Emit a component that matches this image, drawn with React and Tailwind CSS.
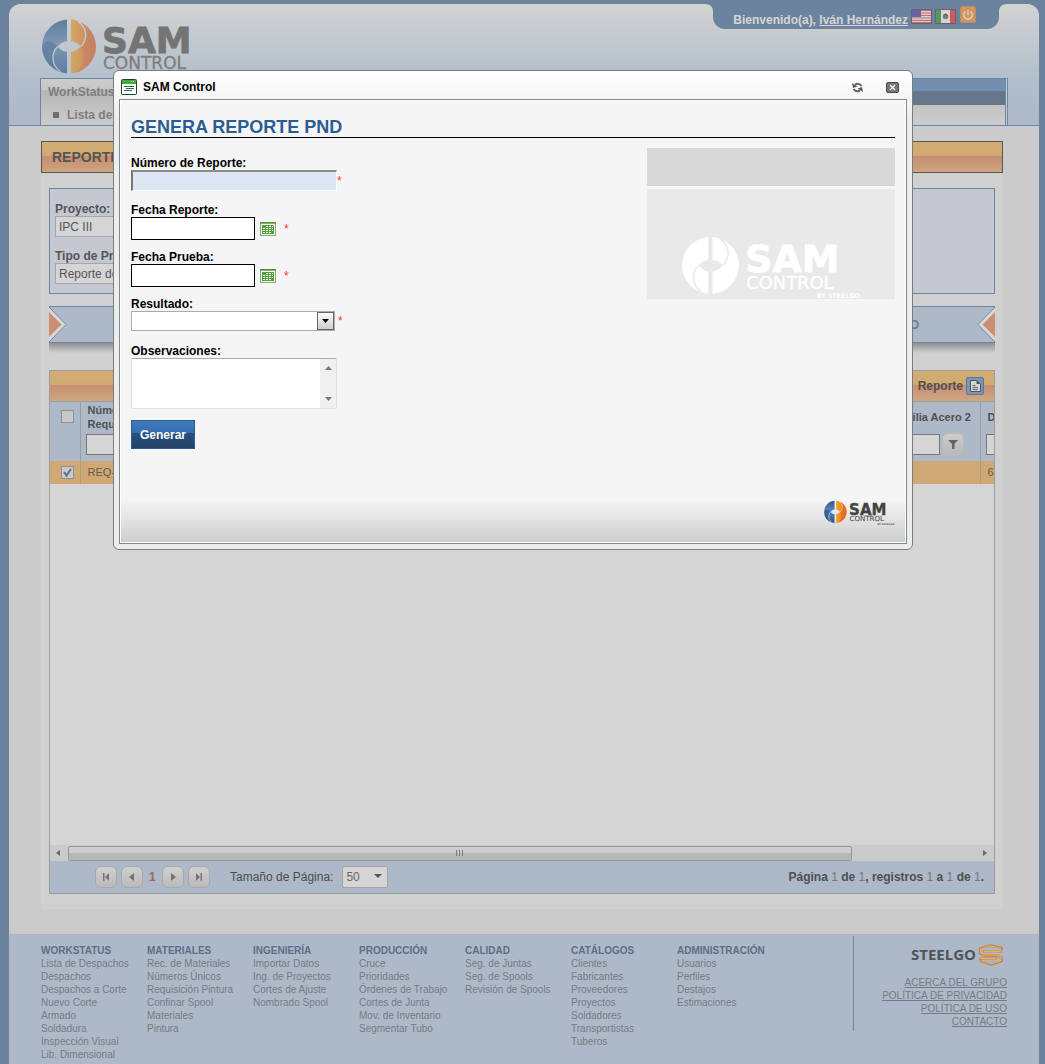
import React from "react";

const footerColumns = [
  { title: "WORKSTATUS", items: ["Lista de Despachos", "Despachos", "Despachos a Corte", "Nuevo Corte", "Armado", "Soldadura", "Inspección Visual", "Lib. Dimensional"] },
  { title: "MATERIALES", items: ["Rec. de Materiales", "Números Únicos", "Requisición Pintura", "Confinar Spool", "Materiales", "Pintura"] },
  { title: "INGENIERÍA", items: ["Importar Datos", "Ing. de Proyectos", "Cortes de Ajuste", "Nombrado Spool"] },
  { title: "PRODUCCIÓN", items: ["Cruce", "Prioridades", "Órdenes de Trabajo", "Cortes de Junta", "Mov. de Inventario", "Segmentar Tubo"] },
  { title: "CALIDAD", items: ["Seg. de Juntas", "Seg. de Spools", "Revisión de Spools"] },
  { title: "CATÁLOGOS", items: ["Clientes", "Fabricantes", "Proveedores", "Proyectos", "Soldadores", "Transportistas", "Tuberos"] },
  { title: "ADMINISTRACIÓN", items: ["Usuarios", "Perfiles", "Destajos", "Estimaciones"] },
];

const corporateLinks = ["ACERCA DEL GRUPO", "POLÍTICA DE PRIVACIDAD", "POLÍTICA DE USO", "CONTACTO"];

function SamLogo({ id, className, left, leftLight, right, rightDark, strong, soft, tagline }) {
  return (
    <svg className={className} viewBox="0 0 170 60" role="img" aria-label="SAM Control">
      <defs>
        <mask id={id + "-cut"}>
          <rect width="60" height="60" fill="#fff" />
          <rect x="25" width="4" height="60" fill="#000" />
          <path d="M15.6 28.5Q20 23 27 23T39 28.5Q34 34.2 27 34.2T15.6 28.5Z" fill="#000" />
          <path d="M15.6 28.5C9 35 9 47 18.4 53.6M35.9 3.4C46 10 45.5 21 39.1 28.5" fill="none" stroke="#000" strokeWidth="1.4" />
        </mask>
        <linearGradient id={id + "-l"} x1="0" y1="0" x2="0" y2="1">
          <stop offset="0" stopColor={left} />
          <stop offset=".45" stopColor={leftLight} />
          <stop offset="1" stopColor={left} />
        </linearGradient>
        <linearGradient id={id + "-r"} x1="0" y1="0" x2="1" y2="0">
          <stop offset="0" stopColor={right} />
          <stop offset="1" stopColor={rightDark} />
        </linearGradient>
      </defs>
      <g mask={`url(#${id}-cut)`}>
        <path d="M27 1.5A27 27 0 0 0 27 55.5Z" fill={`url(#${id}-l)`} />
        <path d="M27 1.5A27 27 0 0 1 27 55.5Z" fill={`url(#${id}-r)`} />
        <path d="M35.9 3.4A27 27 0 0 1 34 54.5Q46 44 39.1 28.5C45.5 21 46 10 35.9 3.4Z" fill={rightDark} opacity=".6" />
        <path d="M15.6 28.5C9 35 9 47 18.4 53.6Q2 48 0 28.5Q5 18 15.6 28.5Z" fill={left} opacity=".7" />
      </g>
      <g fontFamily="'DejaVu Sans', sans-serif">
        <text x="60" y="35" fontSize="36" fontWeight="bold" fill={strong} stroke={strong} strokeWidth=".8">SAM</text>
        <text x="61" y="51" fontSize="17" fill={soft} stroke={soft} strokeWidth=".3">CONTROL</text>
        {tagline && <text x="169" y="59" fontSize="6" fontWeight="bold" textAnchor="end" fill={soft}>BY STEELGO</text>}
      </g>
    </svg>
  );
}

function UsFlag() {
  return (
    <svg className="block h-[15px] w-[21px]" viewBox="0 0 21 15" aria-label="English">
      <rect width="21" height="15" fill="#666" />
      <rect x="1" y="1" width="19" height="13" fill="#d4d0d0" />
      <path d="M1 1.5H20M1 4H20M1 6.5H20M1 9H20M1 11.5H20M1 13.5H20" stroke="#cc6868" strokeWidth="1.2" />
      <rect x="1" y="1" width="9" height="7" fill="#6464a4" />
    </svg>
  );
}

function MxFlag() {
  return (
    <svg className="block h-[15px] w-[21px]" viewBox="0 0 21 15" aria-label="Español">
      <rect width="21" height="15" fill="#666" />
      <rect x="1" y="1" width="5" height="13" fill="#579763" />
      <rect x="6" y="1" width="9" height="13" fill="#d4d4d4" />
      <rect x="15" y="1" width="5" height="13" fill="#d05858" />
      <circle cx="10.5" cy="7.5" r="2.8" fill="#7f7f68" />
      <path d="M9 6l2-1 1.5 2" stroke="#5a5a48" fill="none" />
    </svg>
  );
}

function CalendarIcon() {
  return (
    <svg className="block h-4 w-4" viewBox="0 0 16 16" shapeRendering="crispEdges">
      <rect x="0" y="1" width="16" height="14" fill="#7db765" />
      <rect x="0" y="1" width="16" height="1" fill="#4d8f3f" />
      <rect x="1" y="3" width="14" height="11" fill="#f6faf4" />
      <rect x="2" y="4" width="12" height="9" fill="#57a03f" />
      <path d="M6 5h2v1H6zM9 5h2v1H9zM12 5h1v1h-1zM3 7h2v1H3zM6 7h2v1H6zM9 7h2v1H9zM12 7h1v1h-1zM3 9h2v1H3zM6 9h2v1H6zM9 9h2v1H9zM12 9h1v1h-1zM3 11h2v1H3zM6 11h2v1H6zM9 11h2v1H9z" fill="#fff" />
    </svg>
  );
}

function PagerButton({ label, d }) {
  return (
    <button type="button" aria-label={label} className="flex size-[22px] items-center justify-center rounded-md border border-[#aaa8a5] bg-linear-to-b from-[#d0d0d0] to-[#bababa]">
      <svg className="size-3" viewBox="0 0 12 12"><path d={d} fill="#747474" /></svg>
    </button>
  );
}

function Required() {
  return <span className="text-xs leading-5 text-[#f33]">*</span>;
}

function Header() {
  return (
    <header className="flex h-[122px] flex-col rounded-t-xl bg-linear-to-b from-[#d2d2d2] via-[#b3bfcc] via-60% to-[#adb8c9]">
      <div className="flex h-[74px] items-start justify-between pl-[33px]">
        <SamLogo id="head" className="mt-3.5 h-[60px] w-[170px]" left="#5f7c9f" leftLight="#7e97b3" right="#d3ab60" rightDark="#c68062" strong="#747474" soft="#7e7e7e" />
        <div className="flex pr-8">
          <svg className="size-2" viewBox="0 0 8 8"><path d="M0 0H8V8Q8 0 0 0Z" fill="#6c839e" /></svg>
          <div className="flex h-[25px] items-start rounded-b-xl bg-[#6c839e] pr-[23px] pl-5 text-xs font-bold text-[#d5d5d5]">
            <span className="mt-2 mr-[3px] leading-4 whitespace-nowrap">Bienvenido(a), <a href="#perfil" className="underline">Iván Hernández</a></span>
            <button type="button" className="mt-[5px] mr-[3px]"><UsFlag /></button>
            <button type="button" className="mt-[5px] mr-1"><MxFlag /></button>
            <button type="button" aria-label="Salir" className="mt-0.5 flex h-[17px] w-4 items-center justify-center rounded-xs border border-[#b98a65] bg-[#cf965f]">
              <svg className="size-3" viewBox="0 0 12 12" fill="none" stroke="#dedbd5" strokeWidth="1.2"><path d="M6 1V6M3.5 2.5A4.2 4.2 0 1 0 8.5 2.5" /></svg>
            </button>
          </div>
          <svg className="size-2" viewBox="0 0 8 8"><path d="M8 0H0V8Q0 0 8 0Z" fill="#6c839e" /></svg>
        </div>
      </div>
      <div className="flex h-12">
        <div className="w-[31px] border-b border-[#6c87a5]" />
        <nav className="flex grow border border-[#6c87a5] bg-linear-to-b from-[#b7b7b7] to-[#cdcdcd] font-bold text-[#7f7f7f]">
          <div className="flex w-[300px] flex-col bg-[linear-gradient(#cdcdcd_0%,#c5c5c5_24%,#b7b7b7_25%,#cbcbcb_100%)] pl-[7px] text-xs">
            <a href="#workstatus" className="mt-[5px] leading-4">WorkStatus</a>
            <a href="#lista" className="mt-[7px] flex items-center leading-4"><span className="mr-2 ml-[5px] size-1.5 bg-[#6e6e6e]" />Lista de</a>
          </div>
          <div className="grow">
            <div className="h-3 bg-[#7190b0]" />
            <div className="h-3.5 bg-[#66778c]" />
          </div>
          <div className="w-0.5 border-l border-[#6c87a5] bg-[#cdcdcd]" />
        </nav>
        <div className="w-[31px] border-b border-[#6c87a5]" />
      </div>
    </header>
  );
}

function Filters() {
  return (
    <section className="h-[106px] border border-[#6c87a5] bg-[#c4c8d1] px-[5px] pt-[13px] text-xs text-[#555]">
      <div className="mb-3 flex w-52 flex-col">
        <label htmlFor="proyecto" className="leading-3.5 font-bold">Proyecto:</label>
        <select id="proyecto" className="h-[21px] appearance-none border border-[#a5a7ab] bg-[#d5d5d5] px-[3px]"><option>IPC III</option></select>
      </div>
      <div className="flex w-52 flex-col">
        <label htmlFor="tipo" className="leading-3.5 font-bold">Tipo de Prueba:</label>
        <select id="tipo" className="h-[21px] appearance-none border border-[#a5a7ab] bg-[#d5d5d5] px-[3px]"><option>Reporte de PND</option></select>
      </div>
    </section>
  );
}

function StepBar() {
  return (
    <section className="mt-3">
      <div className="flex h-[37px] items-center justify-between border-y border-[#6c87a5] bg-[#adb9c8]">
        <svg className="h-[35px] w-[18px]" viewBox="0 0 18 35"><path d="M0 0L17.5 17.5L0 35Z" fill="#d8d8d8" /><path d="M0 0L17 17.5L0 35" fill="none" stroke="#6c87a5" /><path d="M0 5L12.5 17.5L0 30Z" fill="#ca8f73" /></svg>
        <span className="ml-auto pr-[58px] text-xs font-bold text-[#6480a3]">O</span>
        <svg className="h-[35px] w-[18px]" viewBox="0 0 18 35"><path d="M18 0L.5 17.5L18 35Z" fill="#d8d8d8" /><path d="M18 0L1 17.5L18 35" fill="none" stroke="#6c87a5" /><path d="M18 5L5.5 17.5L18 30Z" fill="#ca8f73" /></svg>
      </div>
      <div className="h-2.5 bg-linear-to-b from-[#8f8f8f] to-[#d0d0d0]" />
    </section>
  );
}

function Grid() {
  return (
    <section className="mt-[17px] flex grow flex-col border border-[#9c9c9c] bg-[#d5d5d5] text-[#505050]">
      <div className="flex h-[30px] items-center justify-end bg-[linear-gradient(#d3ae74_0%,#d0aa70_46%,#c68e73_47%,#cfa882_100%)] pr-2.5 text-xs font-bold">
        <button type="button" className="flex items-center gap-[3px]">
          Reporte
          <svg className="size-[18px]" viewBox="0 0 18 18"><rect x=".5" y=".5" width="17" height="17" rx="1.5" fill="#7795b6" stroke="#56779c" /><path d="M4.5 3.5H10.5L14.5 7V14.5H4.5Z" fill="#d5d5d5" stroke="#555" /><path d="M10.5 3.5V7H14.5Z" fill="#555" /><path d="M6.5 8.5H9.5M6.5 10.5H12M6.5 12.5H12" fill="none" stroke="#666" /></svg>
        </button>
      </div>
      <table className="w-full table-fixed border-collapse text-left text-[11px]">
        <colgroup><col className="w-[30px]" /><col /><col className="w-[98px]" /><col className="w-3.5" /></colgroup>
        <thead className="bg-[#adb9c8]">
          <tr className="h-[59px] border-t border-[#9c9c9c] align-top">
            <th className="border-r border-[#9c9c9c] pt-2 pl-[11px]"><input type="checkbox" aria-label="Seleccionar todos" className="block size-[13px] appearance-none border border-[#8c9096] bg-[#c9c9c9]" /></th>
            <th className="pt-px pl-[5px] leading-3.5">
              <span className="block pl-0.5">Número de<br />Requisición</span>
              <input aria-label="Filtro de requisición" className="mt-[3px] block h-[21px] w-24 border border-[#777] bg-[#d5d5d5]" />
            </th>
            <th className="border-r border-[#9c9c9c] pt-2 pl-2 leading-3.5">
              <span className="block whitespace-nowrap">Familia Acero 2</span>
              <span className="mt-[9px] flex items-center gap-0.5">
                <input aria-label="Filtro de familia acero 2" className="h-[21px] w-[50px] border border-[#777] bg-[#d5d5d5]" />
                <button type="button" aria-label="Filtrar" className="flex size-[22px] shrink-0 items-center justify-center rounded-md border border-[#bdbbb8] bg-linear-to-b from-[#cdcdcd] to-[#b9b9b9]">
                  <svg className="size-2.5" viewBox="0 0 10 10"><path d="M0 1H10L6.5 5V10H4V5Z" fill="#666" /></svg>
                </button>
              </span>
            </th>
            <th className="overflow-hidden pt-2 pl-[5px] leading-3.5">
              <span className="block pl-0.5">D</span>
              <input aria-label="Filtro de diámetro" className="mt-2.5 block h-[21px] w-4 border border-[#777] bg-[#d5d5d5]" />
            </th>
          </tr>
        </thead>
        <tbody>
          <tr className="h-[23px] bg-[#d0a873] text-[#635b4d]">
            <td className="border-r border-[#b09c80] pl-[11px]">
              <label className="relative block size-[13px]">
                <input type="checkbox" defaultChecked aria-label="Seleccionar REQ" className="block size-[13px] appearance-none border border-[#8c9096] bg-[#c9c9c9]" />
                <svg className="pointer-events-none absolute inset-0 size-[13px]" viewBox="0 0 13 13"><path d="M3 6L5.5 9.5L10 3" fill="none" stroke="#5e6b95" strokeWidth="2" /></svg>
              </label>
            </td>
            <td className="pl-[7px]">REQ-</td>
            <td className="border-r border-[#b09c80]" />
            <td className="pl-[7px]">6</td>
          </tr>
        </tbody>
      </table>
      <div className="min-h-40 grow" />
      <div className="flex h-4 items-center bg-[#cbcbcb]">
        <svg className="mr-2 ml-1.5 h-1.5 w-1" viewBox="0 0 4 6"><path d="M4 0V6L0 3Z" fill="#666" /></svg>
        <div className="flex h-[15px] w-[83%] items-center justify-center gap-0.5 rounded-xs border border-[#999] bg-[linear-gradient(#cdcdcd_45%,#bababa_46%,#b5b5b5_100%)]">
          <span className="h-1.5 w-px bg-[#777]" /><span className="h-1.5 w-px bg-[#777]" /><span className="h-1.5 w-px bg-[#777]" />
        </div>
        <svg className="mr-[7px] ml-auto h-1.5 w-1" viewBox="0 0 4 6"><path d="M0 0V6L4 3Z" fill="#666" /></svg>
      </div>
      <div className="flex h-8 items-center bg-[#adb9c8] pr-2.5 pl-[45px] text-xs">
        <div className="flex items-center gap-1">
          <PagerButton label="Primera página" d="M3 2H4.5V10H3ZM9 2V10L5 6Z" />
          <PagerButton label="Página anterior" d="M8 2V10L3 6Z" />
          <span className="w-[11px] pl-0.5 font-bold text-[#a8644d]">1</span>
          <PagerButton label="Página siguiente" d="M4 2V10L9 6Z" />
          <PagerButton label="Última página" d="M7.5 2H9V10H7.5ZM3 2V10L7 6Z" />
        </div>
        <label htmlFor="tam" className="ml-5 text-[#4c4c4c]">Tamaño de Página:</label>
        <div className="relative ml-[9px]">
          <select id="tam" className="block h-[22px] w-[46px] appearance-none rounded-xs border border-[#a3a3a3] bg-[#d5d5d5] pl-[3px] text-xs text-[#666]"><option>50</option></select>
          <svg className="pointer-events-none absolute top-2 right-1.5 h-1 w-2" viewBox="0 0 8 4"><path d="M0 0H8L4 4Z" fill="#555" /></svg>
        </div>
        <p className="ml-auto font-bold">
          Página <span className="font-normal text-[#777]">1</span> de <span className="font-normal text-[#777]">1</span>, registros <span className="font-normal text-[#777]">1</span> a <span className="font-normal text-[#777]">1</span> de <span className="font-normal text-[#777]">1</span>.
        </p>
      </div>
    </section>
  );
}

function Footer() {
  return (
    <footer className="flex min-h-[130px] justify-between bg-[#adb9c8] pr-8 pl-8 text-[10px] text-[#757b83]">
      <div className="flex pt-[11px]">
        {footerColumns.map((column) => (
          <div key={column.title} className="w-[106px]">
            <h2 className="leading-3 font-bold whitespace-nowrap text-[#5c6f89]">{column.title}</h2>
            <ul>
              {column.items.map((item) => (
                <li key={item} className="leading-[13px] whitespace-nowrap"><a href="#seccion">{item}</a></li>
              ))}
            </ul>
          </div>
        ))}
      </div>
      <div className="mt-0.5 flex h-[95px] w-[154px] flex-col items-end border-l border-[#6c87a5]">
        <svg className="mt-2 mr-1 h-[22px] w-[92px]" viewBox="0 0 92 22" role="img" aria-label="Steelgo">
          <text x="0" y="16" fontFamily="'Open Sans', sans-serif" fontSize="15" fontWeight="bold" fill="#4f545a">STEELGO</text>
          <g fill="none" strokeLinejoin="round">
            <path d="M91 6V4L80 1.5L69 4.500V9L74 11.500H87L90.500 14V17L80 20.500L70 17V15" stroke="#cb8354" strokeWidth="2.8" />
            <path d="M72 7.500H91M68 14.500H86" stroke="#cb8354" strokeWidth="2" />
            <path d="M90 4.500L80 2L69.500 5V8.500L74 11H87L90 13.500V16.500L80 20L70 16.500M73 7.500H90M69 14.500H85" stroke="#dfb565" strokeWidth="1.2" />
          </g>
        </svg>
        <ul className="mt-2.5 text-right">
          {corporateLinks.map((text) => (
            <li key={text} className="leading-[13px]"><a href="#grupo" className="underline">{text}</a></li>
          ))}
        </ul>
      </div>
    </footer>
  );
}

function DateField({ id, label }) {
  return (
    <div>
      <label htmlFor={id} className="block leading-3.5 font-bold">{label}</label>
      <div className="flex items-center">
        <input id={id} className="h-[23px] w-[124px] border border-black bg-white px-1" />
        <button type="button" aria-label={"Calendario, " + label} className="mr-2 ml-[5px]"><CalendarIcon /></button>
        <Required />
      </div>
    </div>
  );
}

function ReportDialog() {
  return (
    <div role="dialog" aria-label="SAM Control" className="flex w-[800px] flex-col rounded-md border border-[#777d80] bg-linear-to-b from-white via-[#ededed] via-10% to-[#ededed] px-[5px] pb-[5px] text-xs text-black">
      <div className="flex h-7 items-center pt-1 pr-2 pl-0.5">
        <svg className="mr-1.5 size-4" viewBox="0 0 16 16"><rect x=".5" y=".5" width="15" height="15" rx="1" fill="#fff" stroke="#1c4423" /><rect x="1" y="1" width="14" height="4" fill="#44a83c" /><path d="M10 2.5h1M12 2.5h1" stroke="#c9f0c0" /><path d="M3 7.5H13M5 9.5H13M3 11.5H11" stroke="#286e3e" /></svg>
        <span className="font-bold">SAM Control</span>
        <button type="button" aria-label="Recargar" className="ml-auto">
          <svg className="block size-[11px]" viewBox="0 0 11 11" fill="none" stroke="#666" strokeWidth="2"><path d="M9.5 4Q7 .5 3 2.5M1.5 7Q4 10.5 8 8.5" /><path d="M0 1L1 6L5.5 4.5ZM11 10L10 5L5.5 6.5Z" fill="#5a5a5a" stroke="none" /></svg>
        </button>
        <button type="button" aria-label="Cerrar" className="ml-[23px]">
          <svg className="block h-[11px] w-[13px]" viewBox="0 0 13 11"><rect x=".5" y=".5" width="12" height="10" rx="1.5" fill="#777" stroke="#484848" /><path d="M4 3L9 8M9 3L4 8" stroke="#fff" strokeWidth="1.2" /></svg>
        </button>
      </div>
      <div className="border border-[#7c8a8c] bg-white p-px">
        <div className="flex min-h-[441px] flex-col bg-[#f5f5f5]">
          <div className="grow px-2.5 pt-4">
            <h1 className="border-b border-black text-lg leading-5 font-bold text-[#2c5c94]">GENERA REPORTE PND</h1>
            <div className="flex items-start justify-between pt-2.5">
              <form className="mt-2" onSubmit={(e) => e.preventDefault()}>
                <div className="grid auto-rows-[47px]">
                  <div>
                    <label htmlFor="numero" className="block leading-3.5 font-bold">Número de Reporte:</label>
                    <div className="flex items-center">
                      <input id="numero" className="h-[21px] w-[206px] border-t-2 border-r border-b border-l-2 border-t-[#8b8b8b] border-r-white border-b-white border-l-[#777] bg-[#dde7f3] px-1" />
                      <Required />
                    </div>
                  </div>
                  <DateField id="fecha-reporte" label="Fecha Reporte:" />
                  <DateField id="fecha-prueba" label="Fecha Prueba:" />
                  <div>
                    <label htmlFor="resultado" className="block leading-3.5 font-bold">Resultado:</label>
                    <div className="flex items-center gap-[3px]">
                      <div className="relative">
                        <select id="resultado" className="block h-5 w-[204px] appearance-none border border-[#aaabb2] bg-white" defaultValue=""><option value=""></option></select>
                        <span className="pointer-events-none absolute top-px right-px flex h-[18px] w-[17px] items-center justify-center border border-[#666] bg-linear-to-b from-white to-[#ccc]">
                          <svg className="h-1 w-[7px]" viewBox="0 0 7 4"><path d="M0 0H7L3.5 4Z" fill="#000" /></svg>
                        </span>
                      </div>
                      <Required />
                    </div>
                  </div>
                </div>
                <label htmlFor="obs" className="block leading-3.5 font-bold">Observaciones:</label>
                <div className="flex h-[51px] w-[206px] rounded-xs border border-[#dce2e8] border-t-[#aaabb2] bg-white">
                  <textarea id="obs" className="grow resize-none overflow-hidden p-1" />
                  <div className="flex w-4 shrink-0 flex-col items-center justify-between bg-[#f0f0f0] py-[7px]">
                    <svg className="h-1 w-[7px]" viewBox="0 0 7 4"><path d="M0 4H7L3.5 0Z" fill="#777" /></svg>
                    <svg className="h-1 w-[7px]" viewBox="0 0 7 4"><path d="M0 0H7L3.5 4Z" fill="#777" /></svg>
                  </div>
                </div>
                <button type="submit" className="mt-[11px] h-[29px] border border-[#2c5c94] bg-[linear-gradient(#3f7abc_0%,#356eae_45%,#264f7f_46%,#234365_100%)] px-2 font-bold text-white">Generar</button>
              </form>
              <aside className="w-[248px]">
                <div className="h-[38px] bg-[#d8d8d8]" />
                <div className="mt-[3px] flex h-[110px] items-end justify-end bg-[#e9e9e9] pr-[34px]">
                  <SamLogo id="mark" className="h-16 w-[179px]" left="#fff" leftLight="#fff" right="#fff" rightDark="#fff" strong="#fff" soft="#fff" tagline />
                </div>
              </aside>
            </div>
          </div>
          <div className="flex h-[42px] items-start justify-end bg-linear-to-b from-[#f5f5f5] to-[#cecece] pr-2.5">
            <SamLogo id="foot" className="h-[25px] w-[71px]" left="#2b568c" leftLight="#5c88bd" right="#f8a928" rightDark="#e5671c" strong="#424242" soft="#555" tagline />
          </div>
        </div>
      </div>
    </div>
  );
}

export default function App() {
  return (
    <div className="relative flex min-h-screen flex-col bg-[#6c839e] pt-1 pr-1.5 pl-[9px] font-['Liberation_Sans',Arial,sans-serif]">
      <div className="flex grow flex-col rounded-t-xl bg-[#cbcbcb]">
        <Header />
        <main className="mt-[15px] mr-9 mb-[25px] ml-8 flex grow flex-col">
          <div className="flex h-8 items-center border border-[#555] bg-[linear-gradient(#d2ad73_0%,#d0aa70_45%,#c68e73_46%,#cda47e_100%)] px-2.5 text-sm font-bold text-[#555]">REPORTE</div>
          <div className="flex grow flex-col bg-[#d0d0d0] px-2 pt-[15px] pb-[15px]">
            <Filters />
            <StepBar />
            <Grid />
          </div>
        </main>
        <Footer />
      </div>
      <div className="absolute inset-0 flex items-start justify-center pt-[70px] pr-[19px]">
        <ReportDialog />
      </div>
    </div>
  );
}
